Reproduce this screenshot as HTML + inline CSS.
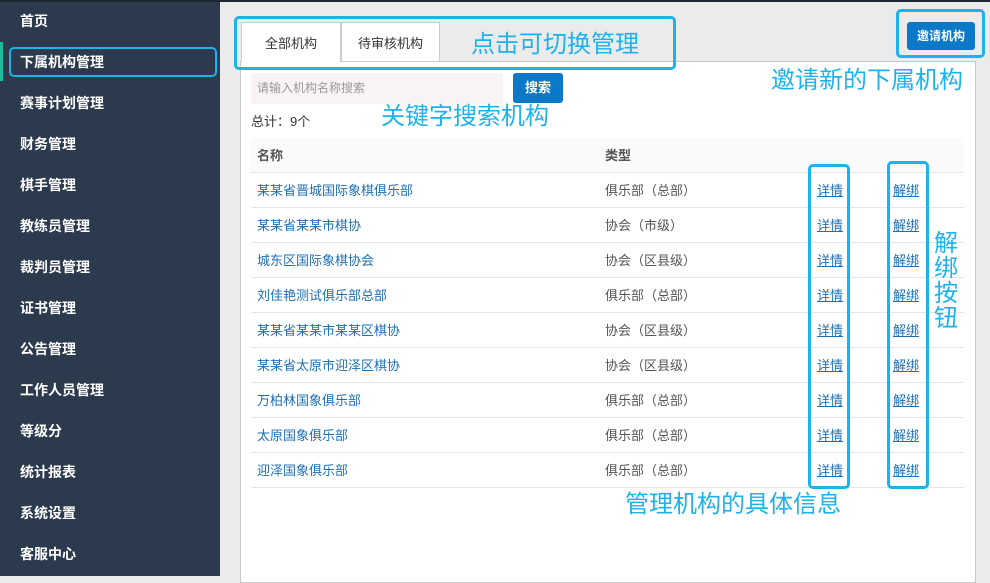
<html><head><style>
body{margin:0;width:990px;height:576px;overflow:hidden;background:#ebebeb;font-family:"Liberation Sans","Noto Sans CJK SC",sans-serif;position:relative}
.a{position:absolute}
.sb{left:0;top:0;width:220px;height:576px;background:#2c3a4e;border-top:2px solid #1c2633;box-sizing:border-box}
.mi{position:absolute;left:20px;color:#fff;font-weight:bold;font-size:14px;line-height:20px}
.box{position:absolute;border:3px solid #1eb2ec;border-radius:5px;box-sizing:border-box}
.note{position:absolute;color:#1eb2ec;font-size:24px;line-height:28px;white-space:nowrap}
.row{position:absolute;left:251px;width:713px;height:35px;border-bottom:1px solid #e6e6e6;font-size:13px;line-height:35px}
.n{position:absolute;left:6px;color:#1f6fb5}
.t{position:absolute;left:354px;color:#555}
.d{position:absolute;left:566px;color:#1f6fb5;text-decoration:underline}
.u{position:absolute;left:642px;color:#1f6fb5;text-decoration:underline}
</style></head><body>
<div class="a" style="left:0;top:0;width:990px;height:2px;background:#1c2633"></div>
<div class="a sb"></div>
<div class="a" style="left:0;top:42px;width:3px;height:39px;background:#1abc9c"></div>
<div class="mi" style="top:11px">首页</div>
<div class="mi" style="top:52px">下属机构管理</div>
<div class="mi" style="top:93px">赛事计划管理</div>
<div class="mi" style="top:134px">财务管理</div>
<div class="mi" style="top:175px">棋手管理</div>
<div class="mi" style="top:216px">教练员管理</div>
<div class="mi" style="top:257px">裁判员管理</div>
<div class="mi" style="top:298px">证书管理</div>
<div class="mi" style="top:339px">公告管理</div>
<div class="mi" style="top:380px">工作人员管理</div>
<div class="mi" style="top:421px">等级分</div>
<div class="mi" style="top:462px">统计报表</div>
<div class="mi" style="top:503px">系统设置</div>
<div class="mi" style="top:544px">客服中心</div>
<div class="box" style="left:9px;top:47px;width:208px;height:30px;border-width:2px"></div>
<div class="a" style="left:240px;top:61px;width:734px;height:520px;background:#fff;border:1px solid #c8c8c8"></div>
<div class="a" style="left:241px;top:22px;width:100px;height:40px;background:#fff;border:1px solid #ccc;border-bottom:none;box-sizing:border-box;text-align:center;line-height:42px;font-size:13px;color:#333">全部机构</div>
<div class="a" style="left:341px;top:22px;width:99px;height:40px;background:#fff;border:1px solid #ccc;box-sizing:border-box;text-align:center;line-height:42px;font-size:13px;color:#333">待审核机构</div>
<div class="box" style="left:234px;top:16px;width:442px;height:54px"></div>
<div class="note" style="left:471px;top:31px">点击可切换管理</div>
<div class="a" style="left:907px;top:22px;width:68px;height:28px;background:#0b78c8;border-radius:3px;color:#fff;font-weight:bold;font-size:12px;text-align:center;line-height:28px">邀请机构</div>
<div class="box" style="left:896px;top:9px;width:89px;height:49px"></div>
<div class="note" style="left:771px;top:67px">邀请新的下属机构</div>
<div class="a" style="left:251px;top:73px;width:252px;height:31px;background:#f9f3f3;border-radius:3px;color:#999;font-size:12px;line-height:31px;text-indent:6px">请输入机构名称搜索</div>
<div class="a" style="left:513px;top:73px;width:50px;height:30px;background:#0b78c8;border-radius:3px;color:#fff;font-weight:bold;font-size:13px;text-align:center;line-height:30px">搜索</div>
<div class="note" style="left:381px;top:103px">关键字搜索机构</div>
<div class="a" style="left:251px;top:113px;font-size:13px;color:#333;line-height:18px">总计：9个</div>
<div class="row" style="top:138px;background:#fafafa;font-weight:bold;color:#555;height:34px;line-height:36px"><span style="position:absolute;left:6px">名称</span><span style="position:absolute;left:354px">类型</span></div>
<div class="row" style="top:172px;line-height:37px"><span class="n">某某省晋城国际象棋俱乐部</span><span class="t">俱乐部（总部）</span><span class="d">详情</span><span class="u">解绑</span></div>
<div class="row" style="top:207px;line-height:37px"><span class="n">某某省某某市棋协</span><span class="t">协会（市级）</span><span class="d">详情</span><span class="u">解绑</span></div>
<div class="row" style="top:242px;line-height:37px"><span class="n">城东区国际象棋协会</span><span class="t">协会（区县级）</span><span class="d">详情</span><span class="u">解绑</span></div>
<div class="row" style="top:277px;line-height:37px"><span class="n">刘佳艳测试俱乐部总部</span><span class="t">俱乐部（总部）</span><span class="d">详情</span><span class="u">解绑</span></div>
<div class="row" style="top:312px;line-height:37px"><span class="n">某某省某某市某某区棋协</span><span class="t">协会（区县级）</span><span class="d">详情</span><span class="u">解绑</span></div>
<div class="row" style="top:347px;line-height:37px"><span class="n">某某省太原市迎泽区棋协</span><span class="t">协会（区县级）</span><span class="d">详情</span><span class="u">解绑</span></div>
<div class="row" style="top:382px;line-height:37px"><span class="n">万柏林国象俱乐部</span><span class="t">俱乐部（总部）</span><span class="d">详情</span><span class="u">解绑</span></div>
<div class="row" style="top:417px;line-height:37px"><span class="n">太原国象俱乐部</span><span class="t">俱乐部（总部）</span><span class="d">详情</span><span class="u">解绑</span></div>
<div class="row" style="top:452px;line-height:37px"><span class="n">迎泽国象俱乐部</span><span class="t">俱乐部（总部）</span><span class="d">详情</span><span class="u">解绑</span></div>
<div class="box" style="left:808px;top:164px;width:42px;height:325px"></div>
<div class="box" style="left:887px;top:161px;width:42px;height:328px"></div>
<div class="note" style="left:934px;top:231px;width:26px;white-space:normal;line-height:25px">解绑按钮</div>
<div class="note" style="left:625px;top:491px">管理机构的具体信息</div>
</body></html>
